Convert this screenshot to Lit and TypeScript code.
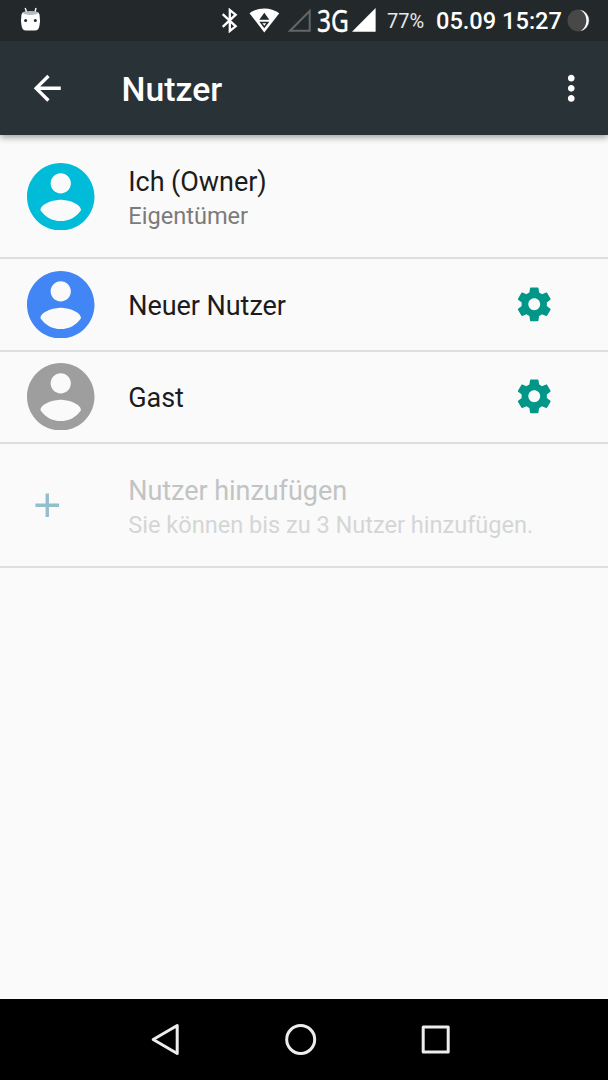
import { LitElement, html, css, svg } from "lit";
import { customElement, property } from "lit/decorators.js";

const GEAR =
  "M19.43 12.98c.04-.32.07-.64.07-.98s-.03-.66-.07-.98l2.11-1.65c.19-.15.24-.42.12-.64l-2-3.46c-.12-.22-.39-.3-.61-.22l-2.49 1c-.52-.4-1.08-.73-1.69-.98l-.38-2.65C14.46 2.18 14.25 2 14 2h-4c-.25 0-.46.18-.49.42l-.38 2.65c-.61.25-1.17.59-1.69.98l-2.49-1c-.23-.09-.49 0-.61.22l-2 3.46c-.13.22-.07.49.12.64l2.11 1.65c-.04.32-.07.65-.07.98s.03.66.07.98l-2.11 1.65c-.19.15-.24.42-.12.64l2 3.46c.12.22.39.3.61.22l2.49-1c.52.4 1.08.73 1.69.98l.38 2.65c.03.24.24.42.49.42h4c.25 0 .46-.18.49-.42l.38-2.65c.61-.25 1.17-.59 1.69-.98l2.49 1c.23.09.49 0 .61-.22l2-3.46c.12-.22.07-.49-.12-.64l-2.11-1.65zM12 15.5c-1.93 0-3.5-1.57-3.5-3.5s1.57-3.5 3.5-3.5 3.5 1.57 3.5 3.5-1.57 3.5-3.5 3.5z";
const BACK = "M20 11H7.83l5.59-5.59L12 4l-8 8 8 8 1.41-1.41L7.83 13H20v-2z";
const MORE =
  "M12 8c1.1 0 2-.9 2-2s-.9-2-2-2-2 .9-2 2 .9 2 2 2zm0 2c-1.1 0-2 .9-2 2s.9 2 2 2 2-.9 2-2-.9-2-2-2zm0 6c-1.1 0-2 .9-2 2s.9 2 2 2 2-.9 2-2-.9-2-2-2z";
const PLUS = "M19 13h-6v6h-2v-6H5v-2h6V5h2v6h6v2z";
const PERSON =
  "M12 2C6.48 2 2 6.48 2 12s4.48 10 10 10 10-4.48 10-10S17.52 2 12 2zm0 3c1.66 0 3 1.34 3 3s-1.34 3-3 3-3-1.34-3-3 1.34-3 3-3zm0 14.2c-2.5 0-4.71-1.28-6-3.22.03-1.99 4-3.08 6-3.08 1.99 0 5.97 1.09 6 3.08-1.29 1.94-3.5 3.22-6 3.22z";

const icon = (d: string) =>
  html`<svg class="icon" viewBox="0 0 24 24">${svg`<path d=${d} fill="currentColor"/>`}</svg>`;

@customElement("status-bar")
class StatusBar extends LitElement {
  static styles = css`
    :host {
      display: flex;
      align-items: center;
      height: 40.5px;
      padding: 0 18px 0 20px;
      box-sizing: border-box;
      background: #23282b;
      color: #fff;
      font-family: Roboto, sans-serif;
      white-space: nowrap;
    }
    svg { display: block; flex: none; }
    .spacer { flex: 1; }
    .wifi { margin-left: 11px; }
    .sim { margin-left: 6.5px; }
    .network {
      width: 41px;
      height: 40px;
      margin: 0 -6px 0 6px;
      font-family: "Noto Sans", sans-serif;
      font-size: 31px;
      line-height: 40px;
      transform: scaleX(0.79);
      transform-origin: 0 50%;
      -webkit-text-stroke: 0.4px #fff;
    }
    .battery, .clock { padding-top: 2px; }
    .battery { width: 38px; margin-left: 11.5px; font-size: 20px; color: #e6e8e9; }
    .clock { width: 127px; margin-left: 11px; font-size: 23.6px; font-weight: 500; }
    .moon { margin-left: 4px; }
  `;
  render() {
    return html`
      <svg width="21" height="26" viewBox="0 1 21 26">
        <path d="M5.200 2 6.600 6M16 2 15 6" stroke="#fff" stroke-width="1.400" />
        <path d="M1.500 8.500Q2 6 5 5.800h11Q19 6 19.500 8.500 20.600 15 19.400 20 18.600 24.500 15 24.500H6Q2.400 24.500 1.600 20 .4 15 1.500 8.500z" fill="#fff" />
        <ellipse cx="10.500" cy="6.900" rx="7.600" ry="2" fill="#b9bcbd" />
        <circle cx="5.600" cy="14.400" r="1.500" fill="#23292c" />
        <circle cx="15.300" cy="14.400" r="1.500" fill="#23292c" />
      </svg>
      <span class="spacer"></span>
      <svg width="17" height="25" viewBox="0 0 17 25">
        <path d="M1.700 6.200 14.700 18.300 8.800 23V2L14.700 6.700 1.700 18.800" fill="none" stroke="#fff" stroke-width="2.300" />
      </svg>
      <svg class="wifi" width="31" height="25" viewBox="0 0 31 25">
        <path d="M.5 5.200Q7 .5 15.300.5T30.300 5.200L15.300 24.500z" fill="#fff" />
        <path d="M15.300 4.800 20.300 11.700H10.300zM10.300 13.700H20.300L15.300 20.300z" fill="#23292c" />
        <path d="M13.400 15.200h3.800l-1.900 2.500z" fill="#fff" />
      </svg>
      <svg class="sim" width="24" height="24" viewBox="0 0 24 24">
        <path d="M3 22.700 22.700 3V22.700z" fill="none" stroke="#62676a" stroke-width="2" />
      </svg>
      <span class="network">3G</span>
      <svg width="24" height="24" viewBox="0 0 24 24"><path d="M0 23.700 23.600 0V23.700z" fill="#fff" /></svg>
      <span class="battery">77%</span>
      <span class="clock">05.09 15:27</span>
      <svg class="moon" width="23" height="23" viewBox="0 0 23 23">
        <circle cx="11.500" cy="11.500" r="11" fill="#484848" />
        <path d="M13 .7a11 11 0 0 1 0 21.600C21.500 18 21.500 5 13 .7z" fill="#fff" />
      </svg>
    `;
  }
}

@customElement("user-row")
class UserRow extends LitElement {
  @property() name = "";
  @property() summary = "";
  @property() color = "";
  @property({ type: Boolean }) settings = false;
  @property({ type: Boolean, reflect: true }) add = false;
  static styles = css`
    :host {
      display: flex;
      align-items: center;
      height: 92.2px;
      padding: 0 54px 0 27px;
      box-sizing: border-box;
      border-bottom: 2px solid #dedede;
      font-family: Roboto, sans-serif;
      color: #1c1c1c;
      white-space: nowrap;
    }
    :host([summary]) { height: 124.4px; }
    .lead { width: 67.5px; margin-right: 33.75px; flex: none; }
    .avatar, .icon { display: block; }
    .avatar { width: 67.5px; height: 67.5px; }
    .icon { width: 40.5px; height: 40.5px; color: #009688; }
    .text { flex: 1; padding-top: 3px; }
    :host([summary]) .text { padding-top: 4.5px; }
    :host([summary]) .avatar { padding-top: 1px; }
    .name { font-size: 27px; line-height: 32px; letter-spacing: -0.05px; }
    .summary { font-size: 23.6px; line-height: 28px; margin-top: 4px; color: #7b7b7b; }
    :host([add]) .icon { color: #93bfcc; }
    :host([add]) .name { color: #c2c4c4; }
    :host([add]) .summary { color: #d4d6d6; letter-spacing: -0.02px; }
  `;
  render() {
    return html`
      <div class="lead">
        ${this.add
          ? icon(PLUS)
          : html`<svg class="avatar" viewBox="2 2 20 20"><path d=${PERSON} fill=${this.color} /></svg>`}
      </div>
      <div class="text">
        <div class="name">${this.name}</div>
        ${this.summary ? html`<div class="summary">${this.summary}</div>` : ""}
      </div>
      ${this.settings ? icon(GEAR) : ""}
    `;
  }
}

@customElement("app-root")
class AppRoot extends LitElement {
  static styles = css`
    :host {
      display: flex;
      flex-direction: column;
      width: 608px;
      height: 1080px;
      background: #fafafa;
      overflow: hidden;
      font-family: Roboto, sans-serif;
    }
    .top { background: #283237; box-shadow: 0 2px 7px rgba(0, 0, 0, 0.4); }
    .bar {
      display: flex;
      align-items: center;
      height: 94.5px;
      padding: 0 17px 0 27px;
      box-sizing: border-box;
      color: #fff;
    }
    .icon { display: block; width: 40.5px; height: 40.5px; }
    .title { flex: 1; margin: 0 0 0 54px; padding-top: 4px; font-size: 33.75px; font-weight: 500; line-height: 40px; }
    .list { flex: 1; }
    .nav {
      display: flex;
      align-items: center;
      justify-content: center;
      gap: 95px;
      height: 81px;
      padding-right: 7px;
      background: #000;
    }
    .key { display: block; width: 40px; height: 40px; fill: none; stroke: #eceeee; stroke-width: 3; stroke-linejoin: round; }
  `;
  render() {
    return html`
      <header class="top">
        <status-bar></status-bar>
        <div class="bar">
          ${icon(BACK)}
          <h1 class="title">Nutzer</h1>
          ${icon(MORE)}
        </div>
      </header>
      <main class="list">
        <user-row name="Ich (Owner)" summary="Eigentümer" color="#00bcd8"></user-row>
        <user-row name="Neuer Nutzer" color="#4285f4" settings></user-row>
        <user-row name="Gast" color="#9e9e9e" settings></user-row>
        <user-row name="Nutzer hinzufügen" summary="Sie können bis zu 3 Nutzer hinzufügen." add></user-row>
      </main>
      <nav class="nav">
        <svg class="key" viewBox="0.3 0.5 40 40"><path d="M7.500 20 31.500 6V34z" /></svg>
        <svg class="key" viewBox="0.3 0.5 40 40"><circle cx="20" cy="20" r="14" /></svg>
        <svg class="key" viewBox="0.3 0.5 40 40"><path d="M7.500 7.500h25v25h-25z" /></svg>
      </nav>
    `;
  }
}
